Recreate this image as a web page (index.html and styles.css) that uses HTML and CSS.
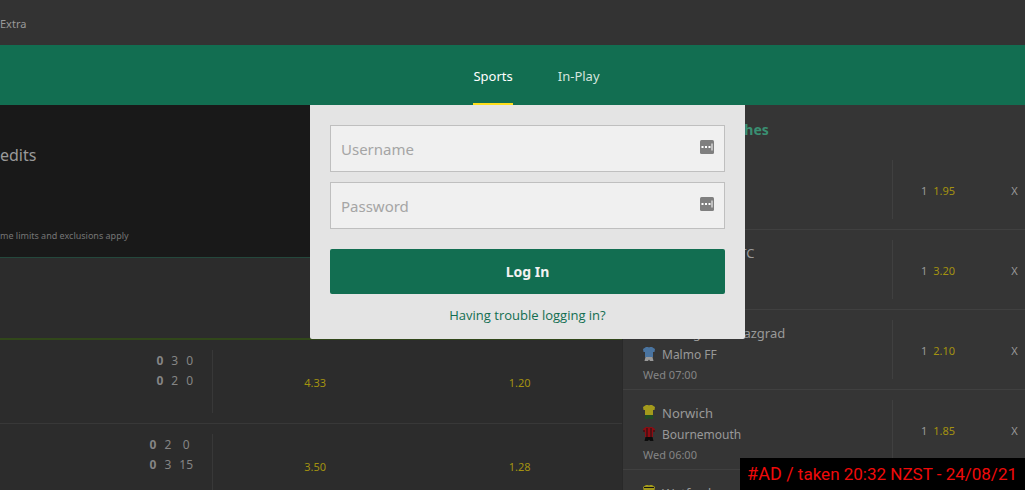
FILE: index.html
```html
<!DOCTYPE html>
<html lang="en">
<head>
	<meta charset="UTF-8">
	<meta name="viewport" content="width=device-width, initial-scale=1.0">
	<title>Log In</title>

	<link rel="stylesheet" href="styles.css">
</head>
<body>

	<!-- shared icons -->
	<svg class="defs" aria-hidden="true">
		<symbol id="shirt" viewBox="0 0 12 14">
			<path d="M3 0h2l1 .6L7 0h2l3 2-.5 3H10v5H2V5H.5L0 2z"/>
		</symbol>
		<symbol id="shorts" viewBox="0 0 12 14">
			<path d="M2.500 10h7l1 4H7L6 12.500 5 14H1.500z"/>
		</symbol>
		<symbol id="keyfill" viewBox="0 0 14 14">
			<rect width="14" height="14" rx="1.500" fill="#7f7f7f"/>
			<path d="M1.500 6h2v2h-2zM5 6h2v2H5zM8.500 6h2v2h-2zM11.500 3.500h1v7h-1z" fill="#fff"/>
		</symbol>
	</svg>

	<div class="topbar"><a href="#">Extra</a></div>

	<nav class="mainnav">
		<a href="#" class="active">Sports</a>
		<a href="#">In-Play</a>
	</nav>

	<main class="content">
		<div class="inplay">
			<div class="promo">
				<h2>edits</h2>
				<p>me limits and exclusions apply</p>
			</div>
			<div class="inplay-head"></div>

			<div class="event">
				<div class="event-score">
					<table>
						<tr><th>0</th><td>3</td><td>0</td></tr>
						<tr><th>0</th><td>2</td><td>0</td></tr>
					</table>
				</div>
				<div class="event-odds">
					<button>4.33</button>
					<button>1.20</button>
				</div>
			</div>
			<div class="event">
				<div class="event-score">
					<table>
						<tr><th>0</th><td>2</td><td>0</td></tr>
						<tr><th>0</th><td>3</td><td>15</td></tr>
					</table>
				</div>
				<div class="event-odds">
					<button>3.50</button>
					<button>1.28</button>
				</div>
			</div>
		</div>

		<aside class="featured">
			<h3>Featured Matches</h3>

			<div class="match">
				<div class="match-teams"></div>
				<div class="match-odds">
					<button>1 <b>1.95</b></button>
					<button>X</button>
				</div>
			</div>
			<div class="match">
				<div class="match-teams">
					<div class="team home"><span class="kit"></span>Ferencvaros TC</div>
				</div>
				<div class="match-odds">
					<button>1 <b>3.20</b></button>
					<button>X</button>
				</div>
			</div>
			<div class="match">
				<div class="match-teams">
					<div class="team home"><span class="kit"></span>Ludogorets Razgrad</div>
					<div class="team">
						<svg class="kit" viewBox="0 0 12 14"><use href="#shirt" fill="#4a74a0"/><use href="#shorts" fill="#999"/></svg>
						Malmo FF
					</div>
					<div class="time">Wed 07:00</div>
				</div>
				<div class="match-odds">
					<button>1 <b>2.10</b></button>
					<button>X</button>
				</div>
			</div>
			<div class="match">
				<div class="match-teams">
					<div class="team home">
						<svg class="kit" viewBox="0 0 12 14"><use href="#shirt" fill="#a39a1c"/><use href="#shorts" fill="#214d24"/></svg>
						Norwich
					</div>
					<div class="team">
						<svg class="kit" viewBox="0 0 12 14"><use href="#shirt" fill="#8e0c12"/><path d="M4 1v9M8 1v9M1 3v2M11 3v2" stroke="#151515"/><use href="#shorts" fill="#0c0c0c"/></svg>
						Bournemouth
					</div>
					<div class="time">Wed 06:00</div>
				</div>
				<div class="match-odds">
					<button>1 <b>1.85</b></button>
					<button>X</button>
				</div>
			</div>
			<div class="match">
				<div class="match-teams">
					<div class="team home">
						<svg class="kit" viewBox="0 0 12 14"><use href="#shirt" fill="#a39a1c"/><path d="M1 2.500h10M2 5.500h8M2 8.500h8" stroke="#151515"/><use href="#shorts" fill="#0c0c0c"/></svg>
						Watford
					</div>
				</div>
				<div class="match-odds"></div>
			</div>
		</aside>
	</main>

	<!-- login dropdown -->
	<form class="login">
		<div class="field">
			<input type="text" placeholder="Username" aria-label="Username">
			<svg><use href="#keyfill"/></svg>
		</div>
		<div class="field">
			<input type="password" placeholder="Password" aria-label="Password">
			<svg><use href="#keyfill"/></svg>
		</div>
		<button type="button">Log In</button>
		<a href="#">Having trouble logging in?</a>
	</form>

	<div class="adnote"><span>#AD /</span> taken 20:32 NZST - 24/08/21</div>

</body>
</html>
```

FILE: styles.css
```css
:root{
	--green: #126e51;
	--odds: #a39210;
	--text: #999;
	--line: #404040;
}
*{
	box-sizing: border-box;
}
body {
	font-family: "Noto Sans", "Open Sans", sans-serif;
	margin: 0;
	height: 100vh;
	display: flex;
	flex-direction: column;
	overflow: hidden;
	position: relative;
	background-color: #2c2c2c;
	color: var(--text);
	font-size: 12px;
}
a {
	text-decoration: none;
	color: inherit;
}
button {
	font: inherit;
	color: inherit;
	background: none;
	border: none;
	padding: 0;
	cursor: pointer;
}
h2, h3, p {
	margin: 0;
}
.defs {
	position: absolute;
	width: 0;
	height: 0;
}

.topbar {
	flex: 0 0 45px;
	display: flex;
	align-items: center;
	padding-top: 2px;
	background-color: #333;
	font-size: 11px;
}

.mainnav {
	flex: 0 0 60px;
	min-height: 0;
	display: flex;
	justify-content: center;
	gap: 45px;
	padding-left: 48px;
	background-color: var(--green);
	color: #d5e5df;
	font-size: 13px;
	line-height: 62px;
}
.mainnav a {
	height: 60px;
}
.mainnav .active {
	color: #fff;
	box-shadow: inset 0 -2px #ffdf1b;
}

.content {
	flex: 1;
	display: flex;
	align-items: stretch;
	min-height: 0;
}

/* left column */
.inplay {
	flex: 1;
}
.promo {
	height: 153px;
	padding-top: 38px;
	background-color: #191919;
	border-bottom: 1px solid #24483c;
}
.promo h2 {
	font-size: 16px;
	font-weight: normal;
	line-height: 24px;
}
.promo p {
	margin-top: 60px;
	font-size: 9px;
	line-height: 18px;
	color: #757575;
}
.inplay-head {
	height: 82px;
	border-bottom: 2px solid #31471a;
}
.event {
	display: flex;
	height: 84px;
	padding: 10px 0;
	border-bottom: 1px solid #383838;
}
.event-score {
	flex: 0 0 213px;
	display: flex;
	justify-content: flex-end;
	align-items: flex-start;
	padding: 1px 15px 0 0;
	border-right: 1px solid #383838;
}
.event-score table {
	border-collapse: collapse;
	color: #858585;
}
.event-score th, .event-score td {
	padding: 0 4px;
	line-height: 20px;
	text-align: center;
}
.event-odds {
	flex: 1;
	display: flex;
	color: var(--odds);
}
.event-odds button {
	flex: 1;
	padding-top: 2px;
	font-size: 11px;
}

/* right column */
.featured {
	flex: 0 0 403px;
	overflow: hidden;
	background-color: #353535;
	border-left: 1px solid #292929;
}
.featured h3 {
	height: 45px;
	padding-left: 20px;
	color: #3a8f72;
	font-size: 14px;
	line-height: 50px;
}
.match {
	display: flex;
	height: 80px;
	padding: 10px 0;
	border-bottom: 1px solid var(--line);
}
.match-teams {
	flex: 1;
	padding: 2px 0 0 20px;
	border-right: 1px solid var(--line);
}
.team {
	display: flex;
	align-items: center;
	gap: 7px;
	line-height: 22px;
	font-size: 12px;
}
.home {
	font-size: 13px;
}
.kit {
	width: 12px;
	height: 14px;
	margin-bottom: 2px;
}
.time {
	font-size: 11px;
	line-height: 18px;
	color: #858585;
}
.match-odds {
	flex: 0 0 132px;
	display: flex;
	align-items: center;
	gap: 56px;
	padding: 2px 0 0 28px;
}
.match-odds button {
	display: flex;
	gap: 6px;
	font-size: 11px;
}
.match-odds b {
	font-weight: normal;
	color: var(--odds);
}

/* login */
.login {
	position: absolute;
	top: 105px;
	right: 280px;
	width: 435px;
	padding: 20px 20px 12px;
	display: flex;
	flex-direction: column;
	gap: 10px;
	background-color: #e4e4e4;
	border-radius: 0 0 2px 2px;
}
.field {
	position: relative;
}
.field input {
	display: block;
	width: 100%;
	height: 47px;
	padding: 0 40px 0 10px;
	border: 1px solid #bfbfbf;
	background-color: #f0f0f0;
	color: #333;
	font: 15px "Noto Sans", "Open Sans", sans-serif;
	outline: none;
}
.field input::placeholder {
	color: #a5a5a5;
}
.field svg {
	position: absolute;
	top: 15px;
	right: 11px;
	width: 14px;
	height: 14px;
}
.login button {
	height: 45px;
	margin-top: 10px;
	border-radius: 2px;
	background-color: var(--green);
	color: #f2f2f2;
	font-size: 14px;
	font-weight: bold;
}
.login a {
	align-self: center;
	color: var(--green);
	font-family: "Open Sans", "Noto Sans", sans-serif;
	font-size: 13px;
	line-height: 23px;
}

.adnote {
	position: absolute;
	right: 0;
	bottom: 0;
	padding: 0 8px 0 7px;
	background-color: #000;
	color: #f00a0a;
	font-family: Roboto, sans-serif;
	font-size: 17px;
	line-height: 32px;
}
.adnote span {
	font-size: 18px;
	line-height: 1;
}
```
